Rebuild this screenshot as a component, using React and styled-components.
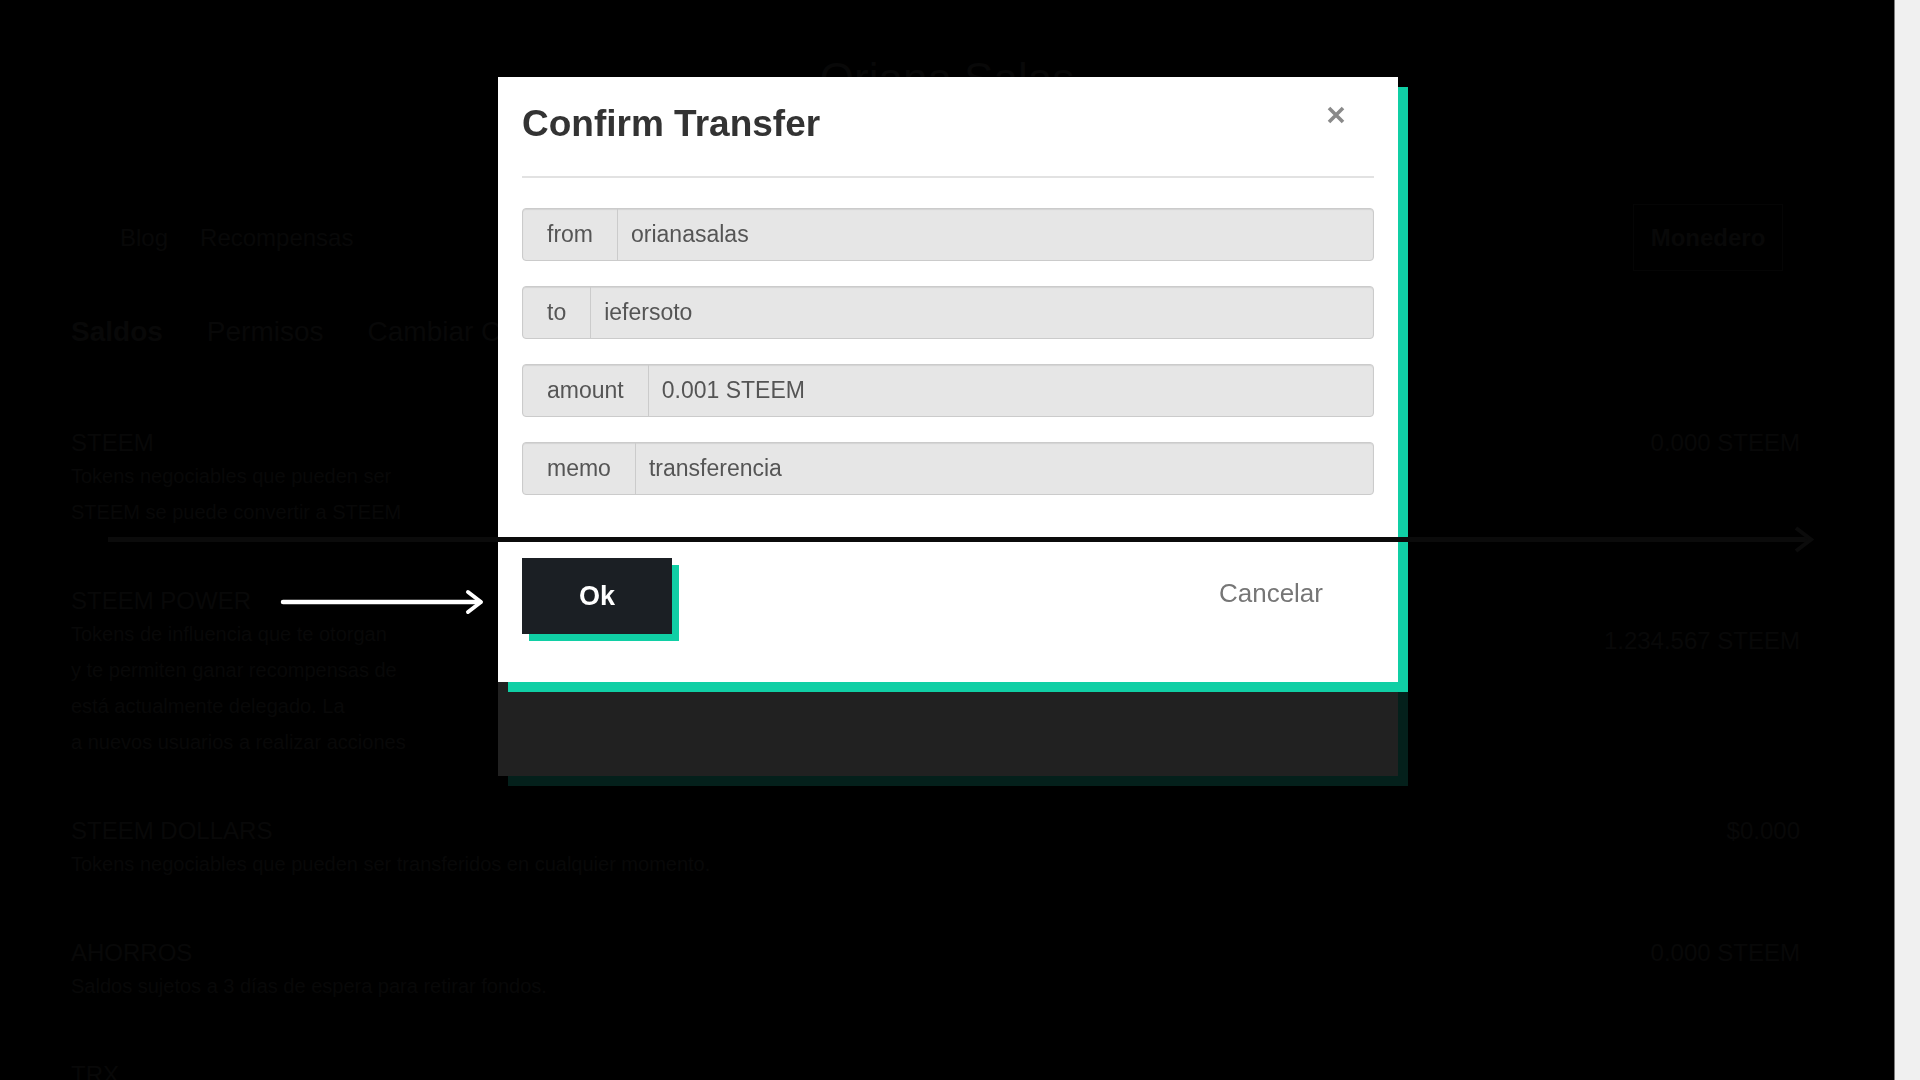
import React from 'react';
import styled, { createGlobalStyle } from 'styled-components';

const TEAL = '#10cfa5';
const FAINT = '#080808';

const GlobalStyle = createGlobalStyle`
  html, body {
    margin: 0;
    padding: 0;
    background: #000;
    overflow: hidden;
  }
  body {
    font-family: "Liberation Sans", Arial, sans-serif;
  }
  * {
    box-sizing: border-box;
  }
`;

const Screen = styled.div`
  display: flex;
  width: 1920px;
  height: 1080px;
  overflow: hidden;
`;

const Wallet = styled.div`
  flex: 1;
  display: flex;
  flex-direction: column;
  background: #000;
  color: ${FAINT};
`;

const ScrollTrack = styled.div`
  width: 26px;
  background: #f0f0f0;
  border-left: 1px solid #7d7d7d;
`;

/* dimmed page behind the dialog */

const OwnerName = styled.h1`
  margin: 57px 0 0;
  text-align: center;
  font-size: 44px;
  line-height: 44px;
  font-weight: 400;
`;

const NavBar = styled.nav`
  display: flex;
  justify-content: space-between;
  align-items: center;
  margin: 103px 111px 0 120px;
  height: 67px;
`;

const NavLinks = styled.div`
  display: flex;
  gap: 32px;
  font-size: 24px;
`;

const NavBox = styled.div`
  display: flex;
  align-items: center;
  justify-content: center;
  width: 150px;
  height: 67px;
  border: 1px solid #050505;
  font-size: 24px;
  font-weight: 700;
`;

const Tabs = styled.div`
  display: flex;
  gap: 44px;
  margin: 45px 0 0 71px;
  font-size: 28px;
  line-height: 32px;
`;

const Tab = styled.span`
  font-weight: ${p => (p.$active ? 700 : 400)};
`;

const Sections = styled.div`
  display: flex;
  flex-direction: column;
  gap: 56px;
  margin-top: 80px;
  padding: 0 94px 0 71px;
`;

const Section = styled.div`
  display: flex;
  justify-content: space-between;
  align-items: flex-start;
`;

const SectionTitle = styled.div`
  font-size: 24px;
  line-height: 30px;
`;

const SectionLine = styled.div`
  font-size: 20px;
  line-height: 36px;
`;

const SectionValue = styled.div`
  font-size: 24px;
  line-height: 30px;
  margin-top: ${p => p.$offset || 0}px;
`;

/* dialog */

const Overlay = styled.div`
  position: fixed;
  top: 0;
  left: 0;
  right: 26px;
  bottom: 0;
  display: flex;
  justify-content: center;
  align-items: flex-start;
  padding: 77px 0 0 2px;
`;

const ModalStack = styled.div`
  width: 900px;
  display: flex;
  flex-direction: column;
`;

const Dialog = styled.div`
  position: relative;
  z-index: 1;
  background: #fff;
  box-shadow: 10px 10px 0 ${TEAL};
  padding: 0 24px 48px;
`;

const DimmedTail = styled.div`
  height: 94px;
  background: #212121;
  box-shadow: 10px 10px 0 #04201b;
`;

const Header = styled.div`
  display: flex;
  justify-content: space-between;
  align-items: flex-start;
  padding: 27px 0 32px;
  border-bottom: 2px solid #e2e2e2;
`;

const Title = styled.h2`
  margin: 0;
  font-size: 37px;
  line-height: 40px;
  font-weight: 700;
  color: #333;
`;

const CloseButton = styled.button`
  display: flex;
  width: 18px;
  height: 18px;
  margin: 2px 29px 0 0;
  padding: 0;
  border: 0;
  background: none;
  cursor: pointer;
`;

const Fields = styled.div`
  display: flex;
  flex-direction: column;
  gap: 25px;
  margin-top: 30px;
`;

const InputGroup = styled.div`
  display: flex;
  height: 53px;
  border: 1px solid #cbcbcb;
  border-radius: 4px;
  overflow: hidden;
  background: #e6e6e6;
  box-shadow: inset 0 1px 1px rgba(0, 0, 0, 0.08);
`;

const Addon = styled.span`
  display: flex;
  align-items: center;
  padding: 0 24px;
  border-right: 1px solid #cbcbcb;
  font-size: 23px;
  color: #555;
`;

const Value = styled.span`
  flex: 1;
  display: flex;
  align-items: center;
  padding: 0 13px;
  font-size: 23px;
  color: #555;
`;

const Footer = styled.div`
  display: flex;
  justify-content: space-between;
  align-items: center;
  margin-top: 63px;
`;

const OkButton = styled.button`
  width: 150px;
  height: 76px;
  border: 0;
  background: #1b1f24;
  color: #fff;
  font-family: "Liberation Sans", Arial, sans-serif;
  font-size: 27px;
  font-weight: 700;
  box-shadow: 7px 7px 0 ${TEAL};
  cursor: pointer;
`;

const CancelButton = styled.button`
  margin: 0 51px 6px 0;
  padding: 0;
  border: 0;
  background: none;
  color: #767676;
  font-family: "Liberation Sans", Arial, sans-serif;
  font-size: 26px;
  cursor: pointer;
`;

/* annotation arrows drawn over the screenshot */

const Annotation = styled.svg`
  position: fixed;
  left: ${p => p.$left}px;
  top: ${p => p.$top}px;
  z-index: 5;
  pointer-events: none;
  overflow: visible;
`;

const fields = [
  { label: 'from', value: 'orianasalas' },
  { label: 'to', value: 'iefersoto' },
  { label: 'amount', value: '0.001 STEEM' },
  { label: 'memo', value: 'transferencia' },
];

const sections = [
  {
    title: 'STEEM',
    lines: ['Tokens negociables que pueden ser', 'STEEM se puede convertir a STEEM'],
    value: '0.000 STEEM',
    offset: 0,
  },
  {
    title: 'STEEM POWER',
    lines: [
      'Tokens de influencia que te otorgan',
      'y te permiten ganar recompensas de',
      'está actualmente delegado. La',
      'a nuevos usuarios a realizar acciones',
    ],
    value: '1.234.567 STEEM',
    offset: 40,
  },
  {
    title: 'STEEM DOLLARS',
    lines: ['Tokens negociables que pueden ser transferidos en cualquier momento.'],
    value: '$0.000',
    offset: 0,
  },
  {
    title: 'AHORROS',
    lines: ['Saldos sujetos a 3 días de espera para retirar fondos.'],
    value: '0.000 STEEM',
    offset: 0,
  },
  { title: 'TRX', lines: [], value: '', offset: 0 },
];

const App = () => {
  return (
    <>
      <GlobalStyle />
      <Screen>
        <Wallet>
          <OwnerName>Oriana Salas</OwnerName>
          <NavBar>
            <NavLinks>
              <span>Blog</span>
              <span>Recompensas</span>
            </NavLinks>
            <NavBox>Monedero</NavBox>
          </NavBar>
          <Tabs>
            <Tab $active>Saldos</Tab>
            <Tab>Permisos</Tab>
            <Tab>Cambiar Co</Tab>
          </Tabs>
          <Sections>
            {sections.map(s => (
              <Section key={s.title}>
                <div>
                  <SectionTitle>{s.title}</SectionTitle>
                  {s.lines.map(l => (
                    <SectionLine key={l}>{l}</SectionLine>
                  ))}
                </div>
                <SectionValue $offset={s.offset}>{s.value}</SectionValue>
              </Section>
            ))}
          </Sections>
        </Wallet>
        <ScrollTrack />
      </Screen>

      <Overlay>
        <ModalStack>
          <Dialog>
            <Header>
              <Title>Confirm Transfer</Title>
              <CloseButton aria-label="close">
                <svg width="18" height="18" viewBox="0 0 18 18">
                  <path d="M2 2 L16 16 M16 2 L2 16" stroke="#8a8a8a" strokeWidth="3.6" fill="none" />
                </svg>
              </CloseButton>
            </Header>
            <Fields>
              {fields.map(f => (
                <InputGroup key={f.label}>
                  <Addon>{f.label}</Addon>
                  <Value>{f.value}</Value>
                </InputGroup>
              ))}
            </Fields>
            <Footer>
              <OkButton>Ok</OkButton>
              <CancelButton>Cancelar</CancelButton>
            </Footer>
          </Dialog>
          <DimmedTail />
        </ModalStack>
      </Overlay>

      <Annotation $left={100} $top={525} width="1720" height="30" viewBox="0 0 1720 30">
        <line x1="8" y1="14.5" x2="1710" y2="14.5" stroke="#0b0b0b" strokeWidth="5" />
        <polyline points="1696,3 1711,14.5 1696,26" stroke="#0b0b0b" strokeWidth="4" fill="none" />
      </Annotation>

      <Annotation $left={278} $top={588} width="210" height="28" viewBox="0 0 210 28">
        <line x1="5" y1="14" x2="202" y2="14" stroke="#fff" strokeWidth="4.5" strokeLinecap="round" />
        <polyline points="190,4 203,14 190,24" stroke="#fff" strokeWidth="4" strokeLinecap="round" strokeLinejoin="round" fill="none" />
      </Annotation>
    </>
  );
};

export default App;
